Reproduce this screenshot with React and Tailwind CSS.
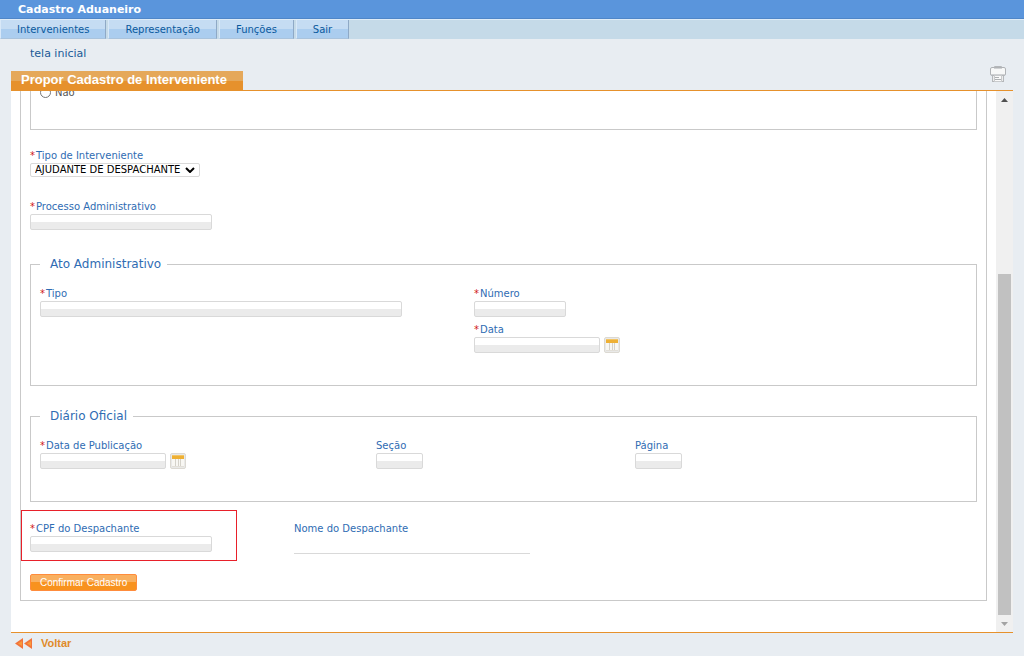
import React, { useState } from 'react';

const menuItems = ['Intervenientes', 'Representação', 'Funções', 'Sair'];

const inputStyle =
  'block h-4 rounded-[2px] border border-[#d9d9d9] bg-[linear-gradient(#ffffff_50%,#ebebeb_50%)] px-1 text-[10px] text-black outline-none focus:border-[#5a95dc]';

const PrinterIcon = () => (
  <svg width="16" height="16" viewBox="0 0 16 16" className="block">
    <path d="M4.5 2.5v-2h7v2" fill="#f4f4f4" stroke="#b4b7ba" />
    <rect x="0.5" y="1.5" width="15" height="8" rx="1.5" fill="#f7f8f8" stroke="#b0b3b6" />
    <path d="M4 2.5h8" stroke="#d0d2d4" />
    <path d="M1 8.5h14" stroke="#cfd1d3" />
    <rect x="2.5" y="9.5" width="11" height="6" fill="#ececec" stroke="#b4b7ba" />
    <rect x="4.5" y="9.5" width="7" height="6" fill="#fafafa" stroke="#c8cacc" />
    <path d="M5 11.5h4M5 13.5h6" stroke="#aeb1b3" />
  </svg>
);

const CalendarIcon = () => (
  <svg width="16" height="16" viewBox="0 0 16 16" className="block">
    <rect x="0.5" y="0.5" width="15" height="15" rx="1.5" fill="#e9e9e8" stroke="#dcd9d2" />
    <rect x="2" y="5" width="12" height="9" fill="#f8f7f3" />
    <rect x="2" y="2" width="12" height="4" fill="#eeb034" />
    <path d="M2 2.5h12" stroke="#f2c466" />
    <path d="M5.5 6v7M8.5 6v7M10.5 6v7" stroke="#d5d2ca" />
    <path d="M2 13.5h12" stroke="#e2dfd8" />
  </svg>
);

const BackIcon = () => (
  <svg width="18" height="11" viewBox="0 0 18 11" className="block">
    <path d="M8 0v11L0 5.5z" fill="#f2743a" />
    <path d="M17 0v11L9 5.5z" fill="#f2743a" />
    <path d="M7 3v5L3 5.5zM16 3v5l-4-2.5z" fill="#f99a3c" />
  </svg>
);

const Label = ({ htmlFor, required, children }) => (
  <label htmlFor={htmlFor} className="block h-4 whitespace-nowrap leading-[18px]">
    {required && <span className="mr-px text-[#d01818]">*</span>}
    {children}
  </label>
);

const Field = ({ id, label, required, width }) => (
  <div>
    <Label htmlFor={id} required={required}>{label}</Label>
    <input id={id} type="text" className={`${inputStyle} ${width}`} />
  </div>
);

const DateField = ({ id, label }) => (
  <div>
    <Label htmlFor={id} required>{label}</Label>
    <div className="flex gap-1">
      <input id={id} type="text" className={`${inputStyle} w-[126px]`} />
      <button type="button" aria-label="Calendário">
        <CalendarIcon />
      </button>
    </div>
  </div>
);

const Group = ({ title, className, children }) => (
  <fieldset className={`border border-[#c9c9c9] px-[9px] pb-8 ${className}`}>
    <legend className="h-[18px] pr-[6px] pl-[10px] text-[12px] leading-[19px]">{title}</legend>
    <div className="pt-3">{children}</div>
  </fieldset>
);

const ScrollBar = () => (
  <div className="flex w-[17px] shrink-0 flex-col bg-[#f0f0f0]">
    <button type="button" aria-label="Subir" className="flex h-[17px] items-center justify-center">
      <svg width="7" height="4" viewBox="0 0 7 4"><path d="M0 4L3.5 0L7 4z" fill="#505050" /></svg>
    </button>
    <div className="flex-[166]" />
    <div className="mx-[2px] flex-[341] bg-[#c1c1c1]" />
    <button type="button" aria-label="Descer" className="flex h-[17px] items-center justify-center">
      <svg width="7" height="4" viewBox="0 0 7 4"><path d="M0 0L3.5 4L7 0z" fill="#a3a3a3" /></svg>
    </button>
  </div>
);

const App = () => {
  const [tipo, setTipo] = useState('ajudante');

  return (
    <div className="flex h-screen flex-col bg-[#e8edf2] font-['DejaVu_Sans',sans-serif] text-[10px] text-[#2f6cb3]">
      {/* Top bar */}
      <header className="h-[19px] shrink-0 border-b border-[#4f86c8] bg-[#5a95dc] px-[18px] text-[11px] font-bold leading-[19px] text-white">
        Cadastro Aduaneiro
      </header>

      {/* Menu */}
      <nav className="flex h-5 shrink-0 gap-[2px] border-t border-[#deebf7] bg-[#c5dae8]">
        {menuItems.map((item) => (
          <a
            key={item}
            href="#"
            className="border-r border-b border-l border-r-[#8fa9c6] border-b-[#a9c3dd] border-l-[#d8e8f8] bg-[linear-gradient(#c5dcf3_50%,#abcdef_50%)] px-4 leading-5 text-[#0a5a9e]"
          >
            {item}
          </a>
        ))}
      </nav>

      <p className="h-[27px] shrink-0 pl-[30px] text-[11px] leading-[29px] text-[#1a5a96]">tela inicial</p>

      {/* Page title */}
      <div className="mx-[11px] flex shrink-0 items-end justify-between border-b border-[#e6912c]">
        <h1 className="h-[19px] bg-[linear-gradient(#e5a85a_55%,#e6912c_55%)] pr-4 pl-[10px] font-['Liberation_Sans',sans-serif] text-[13px] font-bold leading-[17px] text-white">
          Propor Cadastro de Interveniente
        </h1>
        <button type="button" aria-label="Imprimir" className="mr-[7px] mb-2">
          <PrinterIcon />
        </button>
      </div>

      {/* Scrolled form */}
      <main className="mx-[11px] flex min-h-0 flex-1 border-b border-[#e6912c] bg-white">
        <div className="flex-1 overflow-hidden px-[9px]">
          <form className="-mt-[7px] border-x border-b border-[#c9c9c9] px-[9px] pb-[9px]" onSubmit={(e) => e.preventDefault()}>
            <div className="h-[46px] border-x border-b border-[#c9c9c9] px-[9px]">
              <label className="flex h-4 items-center gap-1 text-[#555]">
                <input type="radio" name="opcao" className="size-[11px] appearance-none rounded-full border border-[#767676] bg-white checked:border-4 checked:border-[#2f6cb3]" />
                Não
              </label>
            </div>

            <div className="mt-[17px]">
              <Label htmlFor="tipo" required>Tipo de Interveniente</Label>
              <div className="relative w-[170px]">
                <select
                  id="tipo"
                  value={tipo}
                  onChange={(e) => setTipo(e.target.value)}
                  className="block h-[14px] w-full appearance-none rounded-[2px] border border-[#d9d9d9] bg-white pl-1 text-[10px] leading-3 text-black outline-none"
                >
                  <option value="ajudante">AJUDANTE DE DESPACHANTE</option>
                  <option value="despachante">DESPACHANTE</option>
                </select>
                <svg width="10" height="6" viewBox="0 0 10 6" className="pointer-events-none absolute top-1 right-[5px]">
                  <path d="M1 1l4 4l4-4" fill="none" stroke="#000" strokeWidth="2" />
                </svg>
              </div>
            </div>

            <div className="mt-[21px]">
              <Field id="processo" label="Processo Administrativo" required width="w-[182px]" />
            </div>

            <Group title="Ato Administrativo" className="mt-[25px]">
              <div className="grid grid-cols-[434px_1fr]">
                <Field id="atoTipo" label="Tipo" required width="w-[362px]" />
                <div className="flex flex-col gap-1">
                  <Field id="numero" label="Número" required width="w-[92px]" />
                  <DateField id="data" label="Data" />
                </div>
              </div>
            </Group>

            <Group title="Diário Oficial" className="mt-[21px]">
              <div className="grid grid-cols-[336px_259px_1fr]">
                <DateField id="publicacao" label="Data de Publicação" />
                <Field id="secao" label="Seção" width="w-[47px]" />
                <Field id="pagina" label="Página" width="w-[47px]" />
              </div>
            </Group>

            <div className="mt-2 -ml-[9px] flex gap-[57px]">
              <div className="w-[216px] border border-[#e8202a] px-2 pt-[9px] pb-2">
                <Field id="cpf" label="CPF do Despachante" required width="w-[182px]" />
              </div>
              <div className="w-[236px] pt-[10px]">
                <Label htmlFor="nome">Nome do Despachante</Label>
                <output id="nome" className="block h-[18px] border-b border-[#d9d9d9]" />
              </div>
            </div>

            <button
              type="submit"
              className="mt-[13px] block h-[17px] rounded-[2px] border border-[#ff8c3c] bg-[linear-gradient(#f9b060_50%,#f8921e_50%)] px-[9px] font-['Liberation_Sans',sans-serif] text-[10px] leading-[15px] text-white"
            >
              Confirmar Cadastro
            </button>
          </form>
        </div>
        <ScrollBar />
      </main>

      {/* Footer */}
      <footer className="h-[23px] shrink-0 px-[15px]">
        <a href="#" className="inline-flex items-center gap-2 font-['Liberation_Sans',sans-serif] text-[11px] font-bold leading-5 text-[#e08a2a]">
          <BackIcon />
          Voltar
        </a>
      </footer>
    </div>
  );
};

export default App;
